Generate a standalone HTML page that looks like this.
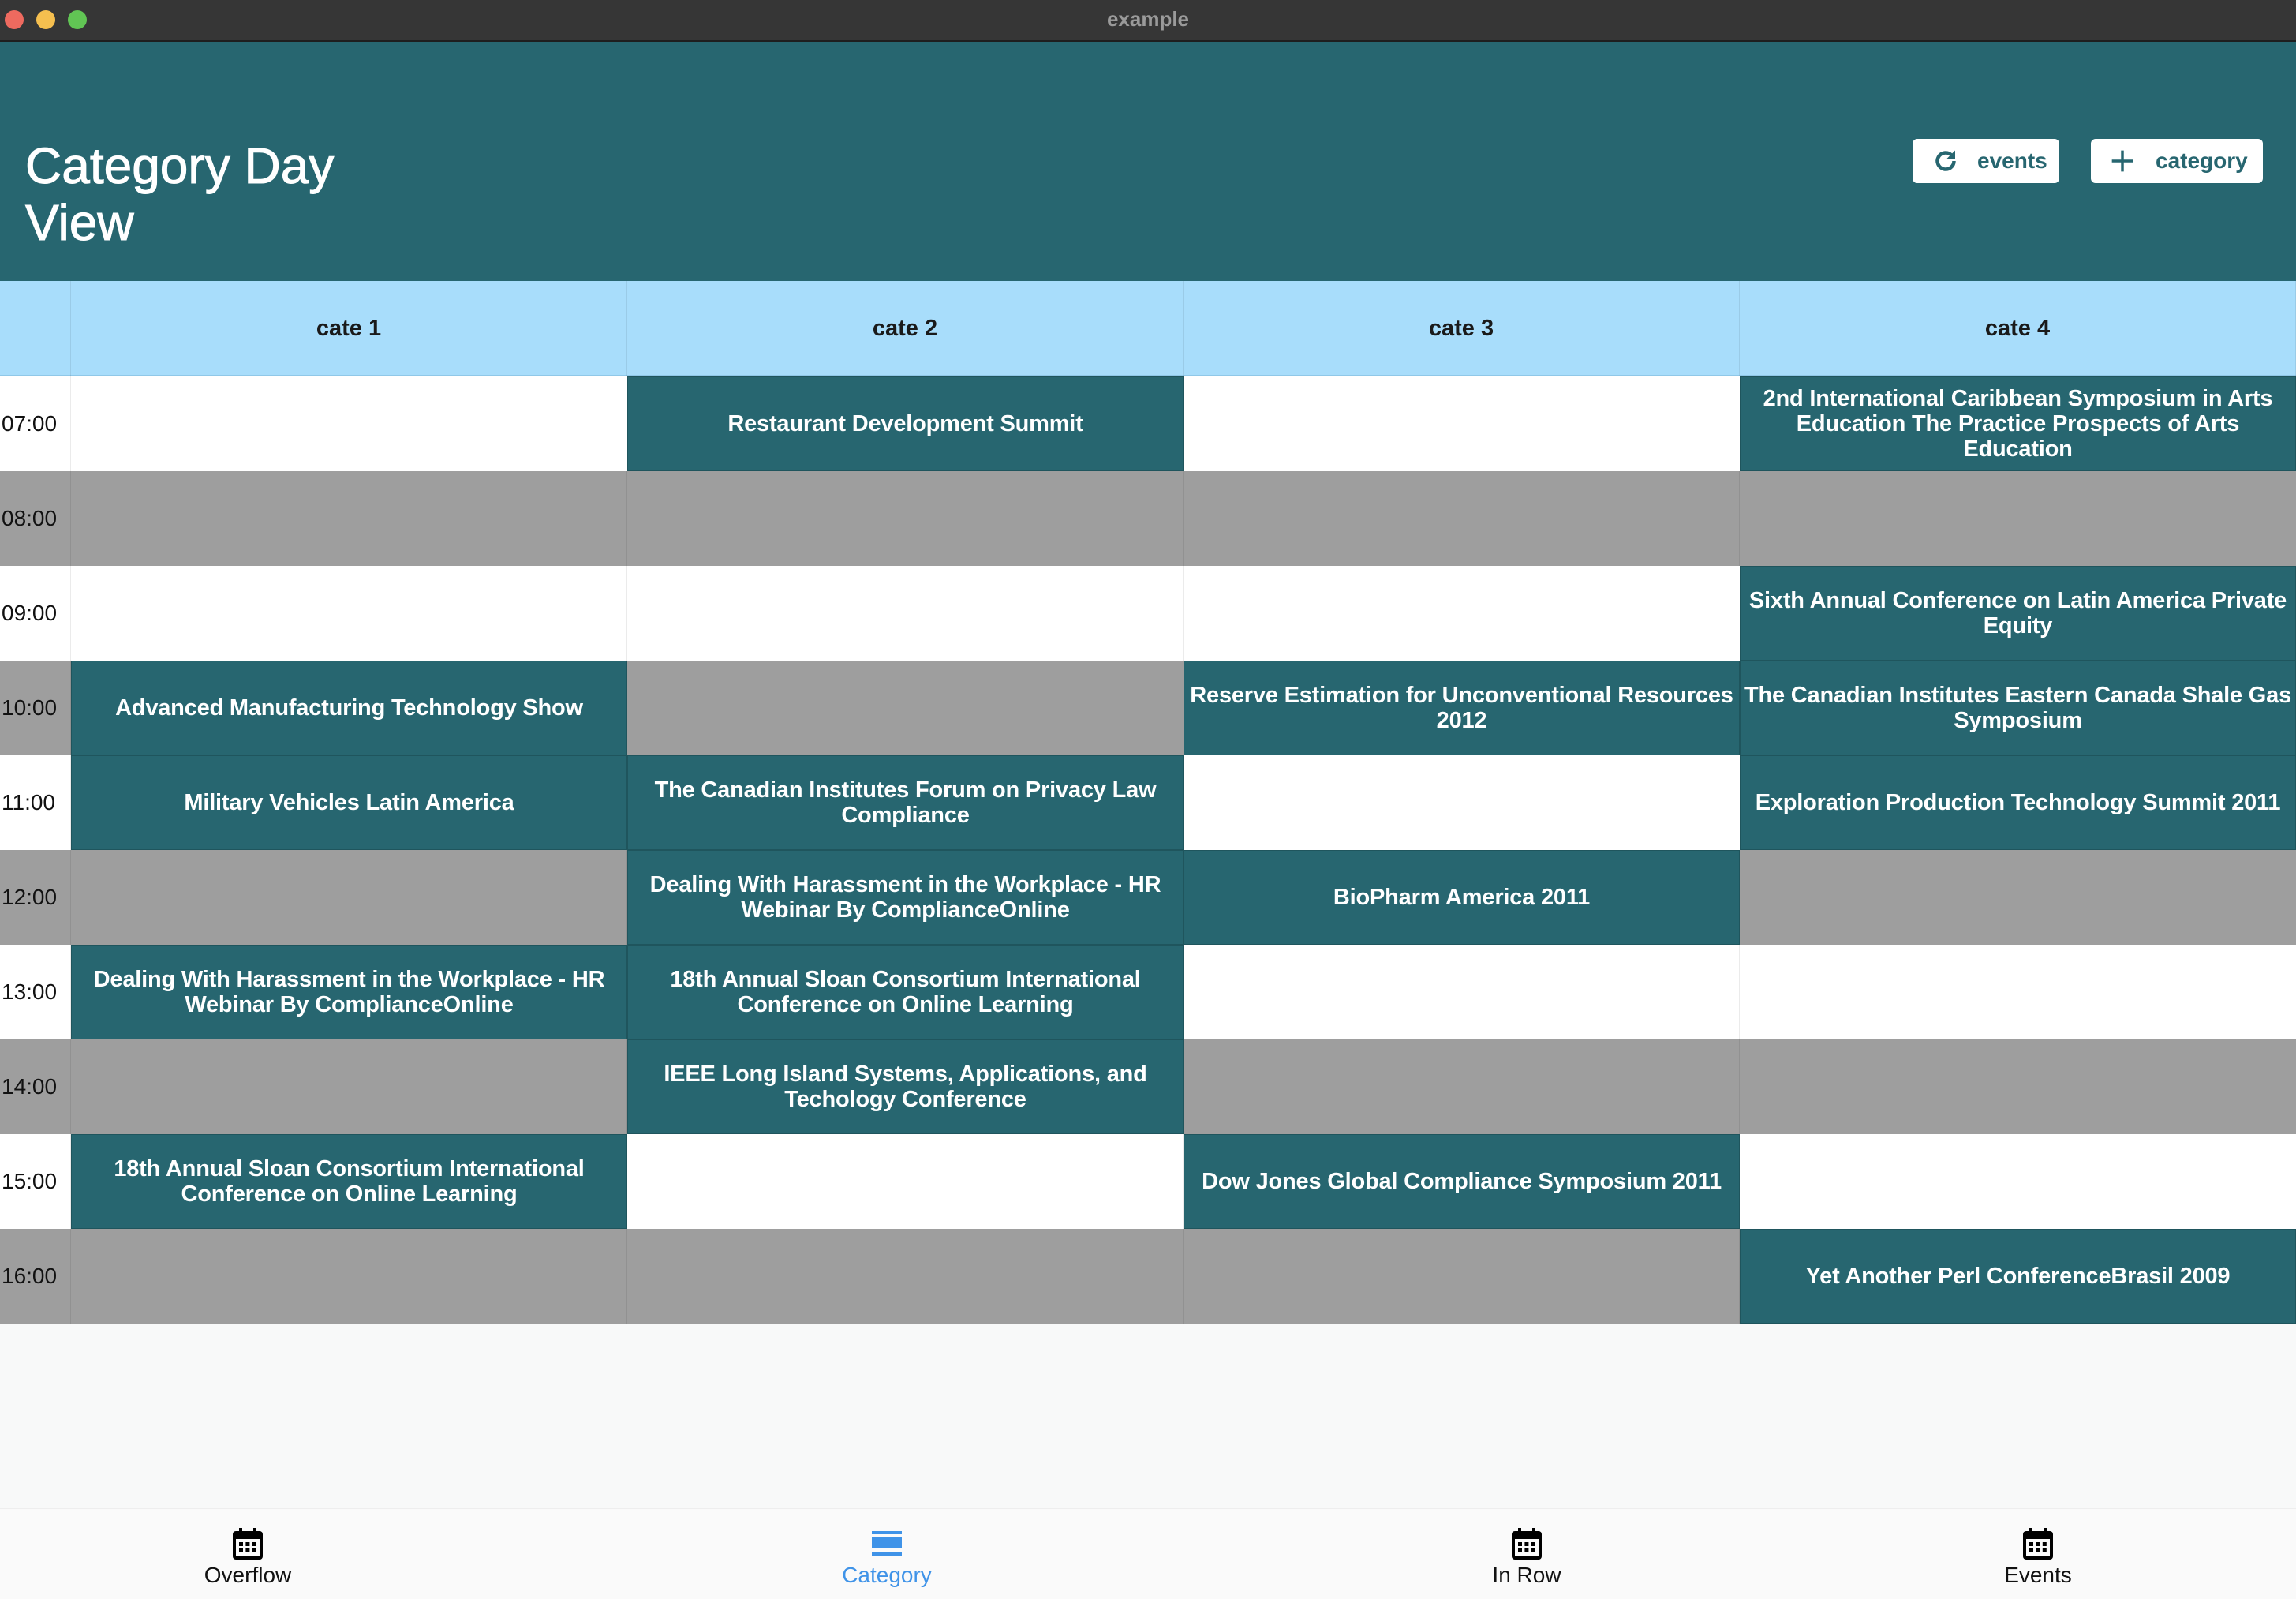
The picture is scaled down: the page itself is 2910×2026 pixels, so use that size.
<!DOCTYPE html>
<html><head><meta charset="utf-8">
<style>
*{margin:0;padding:0;box-sizing:border-box}
body{width:2910px;height:2026px;overflow:hidden;background:#f8f9f9;font-family:"Liberation Sans",sans-serif;position:relative}
.tb{position:absolute;left:0;top:0;width:2910px;height:53px;background:#363636;border-bottom:2px solid #1e1e1e}
.tb .d{position:absolute;top:13px;width:24px;height:24px;border-radius:50%}
.tb .t{position:absolute;width:100%;text-align:center;top:9px;color:#9a9a9a;font-size:26px;font-weight:bold}
.hd{position:absolute;left:0;top:53px;width:2910px;height:303px;background:#276670}
.title{position:absolute;left:32px;top:174px;color:#fff;font-size:64px;line-height:72px;-webkit-text-stroke:1px #fff}
.btn{position:absolute;top:176px;height:56px;background:#fff;border-radius:6px;color:#276670;font-size:28px;font-weight:bold;display:flex;align-items:center}
.row{position:absolute;left:0;width:2910px;height:120px}
.cell{position:absolute;top:0;height:120px;display:flex;align-items:center;justify-content:center;text-align:center;border-right:1px solid rgba(0,0,0,0.08)}
.hrow{background:#a8ddfb;height:121px;border-bottom:2px solid #90c8e8}
.hrow .cell{font-weight:bold;font-size:29px;color:#1a1a1a;height:121px}
.w{background:#fff}.g{background:#9e9e9e}
.tm{font-size:28px;color:#111;justify-content:flex-start;padding-left:2px}
.ev{background:#276670;color:#fff;font-weight:bold;font-size:29px;letter-spacing:-0.2px;line-height:32px;padding:0 2px;border:1px solid #1f555d}
.nav{position:absolute;left:0;top:1911px;width:2910px;height:115px;background:#fafafa;border-top:1px solid #eee}
.ni{position:absolute;top:24px;width:300px;text-align:center;font-size:28px;color:#111}
.ni svg{display:block;margin:0 auto 4px}
</style></head><body>
<div class="tb">
<div class="d" style="left:6px;background:#ee6a5f"></div>
<div class="d" style="left:46px;background:#f5bf4f"></div>
<div class="d" style="left:86px;background:#61c554"></div>
<div class="t">example</div>
</div>
<div class="hd"></div>
<div class="title">Category Day<br>View</div>
<div class="btn" style="left:2424px;width:186px">
<svg style="margin-left:24px" width="36" height="36" viewBox="0 0 24 24"><path d="M19 12a7 7 0 1 1-2.2-5.1" fill="none" stroke="#276670" stroke-width="3"/><path d="M20 3v7h-7z" fill="#276670"/></svg>
<span style="margin-left:22px">events</span></div>
<div class="btn" style="left:2650px;width:218px">
<svg style="margin-left:24px" width="32" height="32" viewBox="0 0 24 24"><path d="M12 2v20M2 12h20" stroke="#276670" stroke-width="2.6"/></svg>
<span style="margin-left:26px">category</span></div>

<div class="row hrow" style="top:356px">
<div class="cell" style="left:0;width:90px"></div>
<div class="cell" style="left:90px;width:705px">cate 1</div>
<div class="cell" style="left:795px;width:705px">cate 2</div>
<div class="cell" style="left:1500px;width:705px">cate 3</div>
<div class="cell" style="left:2205px;width:705px">cate 4</div>
</div>

<div class="row w" style="top:477px">
<div class="cell tm" style="left:0;width:90px">07:00</div>
<div class="cell ev" style="left:795px;width:705px">Restaurant Development Summit</div>
<div class="cell ev" style="left:2205px;width:705px">2nd International Caribbean Symposium in Arts Education The Practice Prospects of Arts Education</div>
</div>
<div class="row g" style="top:597px">
<div class="cell tm" style="left:0;width:90px">08:00</div>
<div class="cell" style="left:90px;width:705px"></div><div class="cell" style="left:795px;width:705px"></div><div class="cell" style="left:1500px;width:705px"></div>
</div>
<div class="row w" style="top:717px">
<div class="cell tm" style="left:0;width:90px">09:00</div>
<div class="cell" style="left:90px;width:705px"></div><div class="cell" style="left:795px;width:705px"></div>
<div class="cell ev" style="left:2205px;width:705px">Sixth Annual Conference on Latin America Private Equity</div>
</div>
<div class="row g" style="top:837px">
<div class="cell tm" style="left:0;width:90px">10:00</div>
<div class="cell ev" style="left:90px;width:705px">Advanced Manufacturing Technology Show</div>
<div class="cell ev" style="left:1500px;width:705px">Reserve Estimation for Unconventional Resources 2012</div>
<div class="cell ev" style="left:2205px;width:705px">The Canadian Institutes Eastern Canada Shale Gas Symposium</div>
</div>
<div class="row w" style="top:957px">
<div class="cell tm" style="left:0;width:90px">11:00</div>
<div class="cell ev" style="left:90px;width:705px">Military Vehicles Latin America</div>
<div class="cell ev" style="left:795px;width:705px">The Canadian Institutes Forum on Privacy Law Compliance</div>
<div class="cell ev" style="left:2205px;width:705px">Exploration Production Technology Summit 2011</div>
</div>
<div class="row g" style="top:1077px">
<div class="cell tm" style="left:0;width:90px">12:00</div>
<div class="cell" style="left:90px;width:705px"></div>
<div class="cell ev" style="left:795px;width:705px">Dealing With Harassment in the Workplace - HR Webinar By ComplianceOnline</div>
<div class="cell ev" style="left:1500px;width:705px">BioPharm America 2011</div>
</div>
<div class="row w" style="top:1197px">
<div class="cell tm" style="left:0;width:90px">13:00</div>
<div class="cell ev" style="left:90px;width:705px">Dealing With Harassment in the Workplace - HR Webinar By ComplianceOnline</div>
<div class="cell ev" style="left:795px;width:705px">18th Annual Sloan Consortium International Conference on Online Learning</div>
<div class="cell" style="left:1500px;width:705px"></div>
</div>
<div class="row g" style="top:1317px">
<div class="cell tm" style="left:0;width:90px">14:00</div>
<div class="cell" style="left:90px;width:705px"></div>
<div class="cell ev" style="left:795px;width:705px">IEEE Long Island Systems, Applications, and Techology Conference</div>
<div class="cell" style="left:1500px;width:705px"></div>
</div>
<div class="row w" style="top:1437px">
<div class="cell tm" style="left:0;width:90px">15:00</div>
<div class="cell ev" style="left:90px;width:705px">18th Annual Sloan Consortium International Conference on Online Learning</div>
<div class="cell" style="left:795px;width:705px"></div>
<div class="cell ev" style="left:1500px;width:705px">Dow Jones Global Compliance Symposium 2011</div>
</div>
<div class="row g" style="top:1557px">
<div class="cell tm" style="left:0;width:90px">16:00</div>
<div class="cell" style="left:90px;width:705px"></div><div class="cell" style="left:795px;width:705px"></div><div class="cell" style="left:1500px;width:705px"></div>
<div class="cell ev" style="left:2205px;width:705px">Yet Another Perl ConferenceBrasil 2009</div>
</div>

<div class="nav">
<div class="ni" style="left:164px"><svg width="38" height="40" viewBox="0 0 19 20"><rect x="0" y="2" width="19" height="18" rx="2" fill="#000"/><rect x="4" y="0" width="2" height="4" fill="#000"/><rect x="13" y="0" width="2" height="4" fill="#000"/><rect x="2" y="7" width="15" height="11" fill="#fafafa"/><g fill="#000"><rect x="4" y="9" width="2.5" height="2.5"/><rect x="8.2" y="9" width="2.5" height="2.5"/><rect x="12.4" y="9" width="2.5" height="2.5"/><rect x="4" y="13" width="2.5" height="2.5"/><rect x="8.2" y="13" width="2.5" height="2.5"/><rect x="12.4" y="13" width="2.5" height="2.5"/></g></svg>Overflow</div>
<div class="ni" style="left:974px;color:#3f93e8"><svg width="38" height="40" viewBox="0 0 19 20"><rect x="0" y="2" width="19" height="2" fill="#3f93e8"/><rect x="0" y="6" width="19" height="7" fill="#3f93e8"/><rect x="0" y="15" width="19" height="3" fill="#3f93e8"/></svg>Category</div>
<div class="ni" style="left:1785px"><svg width="38" height="40" viewBox="0 0 19 20"><rect x="0" y="2" width="19" height="18" rx="2" fill="#000"/><rect x="4" y="0" width="2" height="4" fill="#000"/><rect x="13" y="0" width="2" height="4" fill="#000"/><rect x="2" y="7" width="15" height="11" fill="#fafafa"/><g fill="#000"><rect x="4" y="9" width="2.5" height="2.5"/><rect x="8.2" y="9" width="2.5" height="2.5"/><rect x="12.4" y="9" width="2.5" height="2.5"/><rect x="4" y="13" width="2.5" height="2.5"/><rect x="8.2" y="13" width="2.5" height="2.5"/><rect x="12.4" y="13" width="2.5" height="2.5"/></g></svg>In Row</div>
<div class="ni" style="left:2433px"><svg width="38" height="40" viewBox="0 0 19 20"><rect x="0" y="2" width="19" height="18" rx="2" fill="#000"/><rect x="4" y="0" width="2" height="4" fill="#000"/><rect x="13" y="0" width="2" height="4" fill="#000"/><rect x="2" y="7" width="15" height="11" fill="#fafafa"/><g fill="#000"><rect x="4" y="9" width="2.5" height="2.5"/><rect x="8.2" y="9" width="2.5" height="2.5"/><rect x="12.4" y="9" width="2.5" height="2.5"/><rect x="4" y="13" width="2.5" height="2.5"/><rect x="8.2" y="13" width="2.5" height="2.5"/><rect x="12.4" y="13" width="2.5" height="2.5"/></g></svg>Events</div>
</div>
</body></html>
